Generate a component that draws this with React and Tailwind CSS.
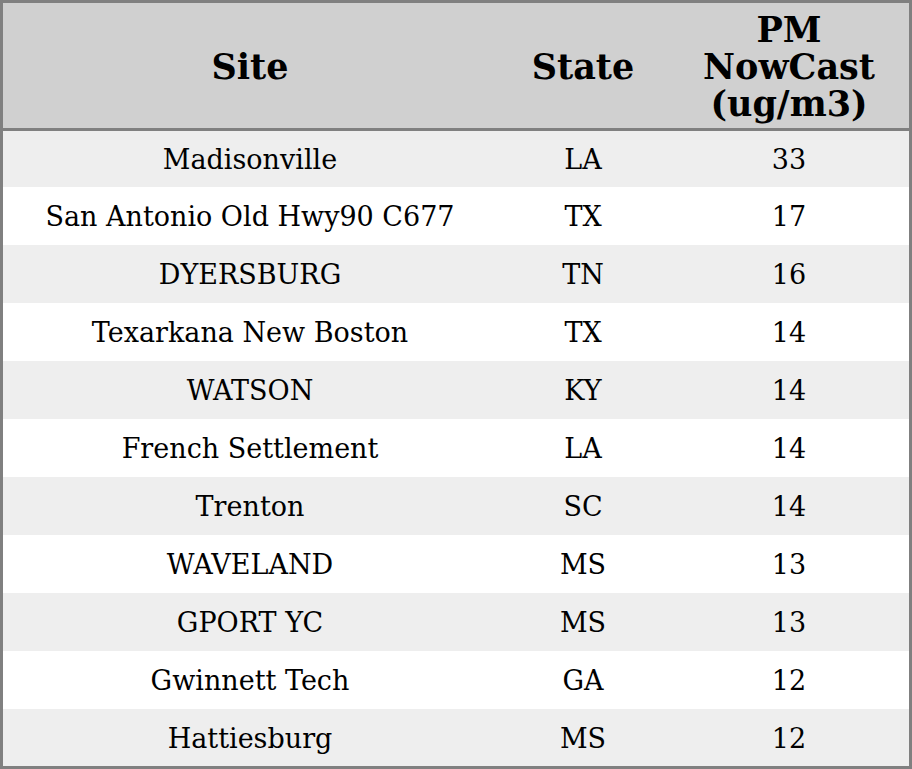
const rows = [
  ['Madisonville', 'LA', '33'],
  ['San Antonio Old Hwy90 C677', 'TX', '17'],
  ['DYERSBURG', 'TN', '16'],
  ['Texarkana New Boston', 'TX', '14'],
  ['WATSON', 'KY', '14'],
  ['French Settlement', 'LA', '14'],
  ['Trenton', 'SC', '14'],
  ['WAVELAND', 'MS', '13'],
  ['GPORT YC', 'MS', '13'],
  ['Gwinnett Tech', 'GA', '12'],
  ['Hattiesburg', 'MS', '12'],
];

export default function App() {
  return (
    <div className="w-[912px] h-[769px] bg-white font-['DejaVu_Serif',serif] text-black">
      <div className="border-[3px] border-[#808080] h-full flex flex-col">
        <div className="grid grid-cols-[494px_172px_240px] h-[128px] bg-[#d0d0d0] border-b-[3px] border-[#808080] font-bold text-[35px] leading-[37px]">
          <div className="flex items-center justify-center pt-[2px]">Site</div>
          <div className="flex items-center justify-center pt-[2px]">State</div>
          <div className="flex items-center justify-center text-center pt-[2px]">
            PM<br />NowCast<br />(ug/m3)
          </div>
        </div>
        {rows.map((r, i) => (
          <div
            key={i}
            className={`grid grid-cols-[494px_172px_240px] text-[27px] pt-[3px] ${
              i === 0 ? 'h-[56px]' : i === rows.length - 1 ? 'h-[57px]' : 'h-[58px]'
            } ${i % 2 === 0 ? 'bg-[#eeeeee]' : 'bg-white'}`}
          >
            <div className="flex items-center justify-center">{r[0]}</div>
            <div className="flex items-center justify-center">{r[1]}</div>
            <div className="flex items-center justify-center">{r[2]}</div>
          </div>
        ))}
      </div>
    </div>
  );
}
